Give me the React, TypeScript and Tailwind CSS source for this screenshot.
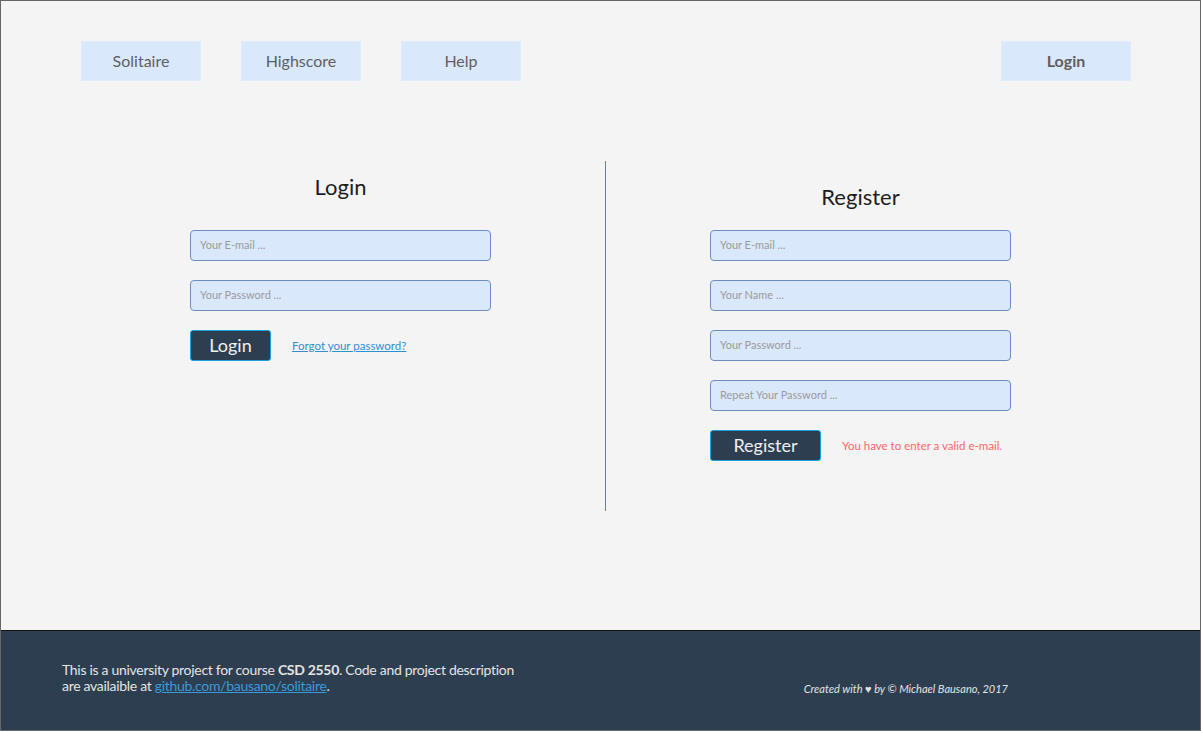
const font = "font-['Lato','Open_Sans',sans-serif]";

function NavButton({ label, bold, wide }: { label: string; bold?: boolean; wide?: boolean }) {
    return (
        <button
            className={`flex h-10 items-center justify-center border border-[#e0ebfb] bg-[#dae8fc] text-[16px] text-[#5f5f5f] ${
                wide ? "w-[130px]" : "w-[120px]"
            } ${bold ? "font-bold" : ""}`}
        >
            {label}
        </button>
    );
}

function Field({ placeholder }: { placeholder: string }) {
    return (
        <div className="mb-[19px] flex h-[31px] w-[301px] items-center rounded-[4px] border border-[#6c8ebf] bg-[#dae8fc] px-[9px] text-[11px] text-[#9a9a9a]">
            {placeholder}
        </div>
    );
}

export default function App() {
    return (
        <div className={`${font} flex h-[731px] w-[1201px] flex-col border border-[#666666] bg-[#f4f4f4]`}>
            <nav className="flex items-start gap-10 pt-10 pl-20 pr-[69px]">
                <NavButton label="Solitaire" />
                <NavButton label="Highscore" />
                <NavButton label="Help" />
                <div className="ml-auto">
                    <NavButton label="Login" bold wide />
                </div>
            </nav>

            <main className="mt-20 flex h-[350px]">
                <section className="w-[604px] pt-[12px] pl-[189px]">
                    <div className="w-[301px]">
                        <h2 className="mb-[29px] text-center text-[22px] leading-[28px] text-[#1e1e1e]">Login</h2>
                        <Field placeholder="Your E-mail ..." />
                        <Field placeholder="Your Password ..." />
                        <div className="flex items-center">
                            <button className="h-[31px] w-[81px] rounded-[3px] border border-[#1ba1e2] bg-[#2c3e50] text-[18px] text-[#f0f0f0]">
                                Login
                            </button>
                            <a className="ml-[21px] text-[11.5px] text-[#2f8fd0] underline">Forgot your password?</a>
                        </div>
                    </div>
                </section>

                <div className="w-px bg-[#3090d0]" />

                <section className="pt-[22px] pl-[104px]">
                    <div className="w-[301px]">
                        <h2 className="mb-[19px] text-center text-[22px] leading-[28px] text-[#1e1e1e]">Register</h2>
                        <Field placeholder="Your E-mail ..." />
                        <Field placeholder="Your Name ..." />
                        <Field placeholder="Your Password ..." />
                        <Field placeholder="Repeat Your Password ..." />
                        <div className="flex items-center">
                            <button className="h-[31px] w-[111px] rounded-[3px] border border-[#1ba1e2] bg-[#2c3e50] text-[18px] text-[#f0f0f0]">
                                Register
                            </button>
                            <span className="ml-[21px] text-[11.5px] text-[#ff6666]">You have to enter a valid e-mail.</span>
                        </div>
                    </div>
                </section>
            </main>

            <footer className="mt-auto flex h-[100px] items-start border-t border-[#111111] bg-[#2d3e50] pt-[31px] pl-[61px] pr-[192px] text-[#e4e4e4]">
                <p className="text-[14px] leading-4 tracking-[-0.3px]">
                    This is a university project for course <b>CSD 2550</b>. Code and project description
                    <br />
                    are availaible at <a className="text-[#3a9ad9] underline">github.com/bausano/solitaire</a>.
                </p>
                <p className="mt-[19px] ml-auto text-[11px] italic">Created with ♥ by © Michael Bausano, 2017</p>
            </footer>
        </div>
    );
}
